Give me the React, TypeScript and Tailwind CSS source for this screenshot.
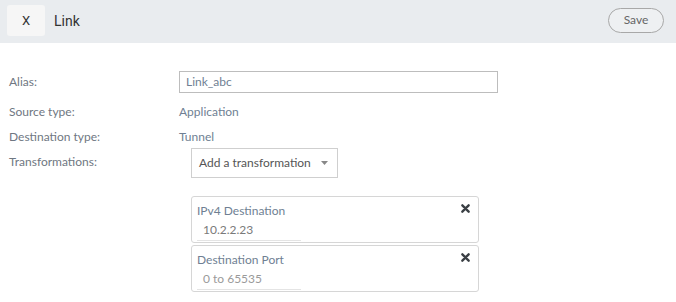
import React from 'react';

const labelCls = 'w-[170px] shrink-0 text-[12px] text-[#6f7782]';
const valueCls = 'text-[12px] text-[#6f7f93]';

function Card({ title, value, placeholder }: { title: string; value?: string; placeholder?: string }) {
  return (
    <div className="relative w-[288px] h-[47px] border border-[#d6d6d6] rounded-[3px] bg-white pl-[5px] pt-[6px]">
      <div className="text-[12px] leading-[16px] text-[#6f7f93]">{title}</div>
      <div className="mt-[3px] w-[104px] border-b border-[#e4e4e4] pl-[6px] pb-[2px] text-[12px] leading-[16px] text-[#7a7a7a]">
        {value ?? <span className="text-[#9a9a9a]">{placeholder}</span>}
      </div>
      <svg className="absolute right-[8px] top-[7px]" width="9" height="9" viewBox="0 0 10 10">
        <path d="M1.5 1.5 L8.5 8.5 M8.5 1.5 L1.5 8.5" stroke="#3a3f44" strokeWidth="2.6" strokeLinecap="round" />
      </svg>
    </div>
  );
}

export default function App() {
  return (
    <div className="w-[676px] h-[302px] bg-white overflow-hidden" style={{ fontFamily: 'Lato, "Open Sans", sans-serif' }}>
      <header className="h-[43px] bg-[#e9ecef] flex items-center justify-between pl-[7px] pr-[12px]">
        <div className="flex items-center">
          <button className="w-[38px] h-[31px] mt-[-2px] rounded-[3px] bg-[#f6f6f6] text-[13px] text-[#333]" style={{ fontFamily: 'Roboto, sans-serif' }}>
            X
          </button>
          <span className="ml-[9px] text-[14px] text-[#333]" style={{ fontFamily: 'Roboto, sans-serif' }}>Link</span>
        </div>
        <button className="w-[56px] h-[25px] mt-[-3px] rounded-full border border-[#a8a8a8] bg-[#eef0f2] text-[12px] text-[#666]">
          Save
        </button>
      </header>

      <main className="pl-[9px] pt-[28px]">
        <div className="flex items-center h-[22px]">
          <div className={labelCls}>Alias:</div>
          <div className="w-[319px] h-[22px] border border-[#bdbdbd] flex items-center pl-[6px] text-[12px] text-[#6f7f93]">
            Link_abc
          </div>
        </div>
        <div className="flex items-center mt-[10px] h-[18px]">
          <div className={labelCls}>Source type:</div>
          <div className={valueCls}>Application</div>
        </div>
        <div className="flex items-center mt-[7px] h-[18px]">
          <div className={labelCls}>Destination type:</div>
          <div className={valueCls}>Tunnel</div>
        </div>
        <div className="flex items-start mt-[7px]">
          <div className={labelCls}>Transformations:</div>
          <div className="ml-[12px] mt-[-5px] w-[147px] h-[30px] border border-[#cfcfcf] flex items-center justify-between pl-[7px] pr-[9px] text-[12px] text-[#555]">
            <span>Add a transformation</span>
            <svg width="7" height="4" viewBox="0 0 7 4"><path d="M0 0 L7 0 L3.5 4 Z" fill="#888" /></svg>
          </div>
        </div>
        <div className="ml-[182px] mt-[18px] flex flex-col gap-[2px]">
          <Card title="IPv4 Destination" value="10.2.2.23" />
          <Card title="Destination Port" placeholder="0 to 65535" />
        </div>
      </main>
    </div>
  );
}
